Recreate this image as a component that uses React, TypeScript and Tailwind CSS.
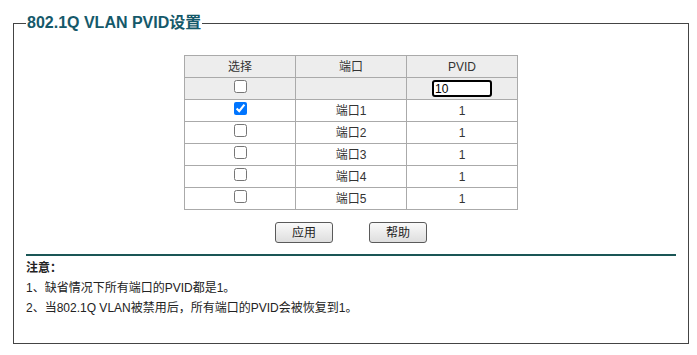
import React from 'react';

const ports = [
  { name: '端口1', pvid: 1, checked: true },
  { name: '端口2', pvid: 1, checked: false },
  { name: '端口3', pvid: 1, checked: false },
  { name: '端口4', pvid: 1, checked: false },
  { name: '端口5', pvid: 1, checked: false },
];

const font = { fontFamily: 'Arial, "Liberation Sans", "Noto Sans CJK SC", sans-serif' };

function Btn({ label }: { label: string }) {
  return (
    <button
      type="button"
      className="w-[58px] h-[21px] rounded-[3px] border border-[#5a5a5a] bg-gradient-to-b from-[#fafafa] to-[#dedede] text-[12px] text-[#222] leading-none"
    >
      {label}
    </button>
  );
}

export default function App() {
  return (
    <div className="w-[697px] h-[355px] bg-white text-[#333]" style={font}>
      <fieldset className="ml-[13px] mt-[14px] w-[676px] border border-[#444] px-[12px] pb-[25px]">
        <legend className="ml-0 px-[1px] text-[16px] leading-[18px] font-bold text-[#15596a]">
          802.1Q VLAN PVID设置
        </legend>

        {/* Table */}
        <table className="mt-[23px] mx-auto w-[333px] border-collapse text-[12px] text-center table-fixed">
          <thead>
            <tr className="h-[22px] bg-[#ededed]">
              <th className="font-normal border border-[#aaa] w-[111px]">选择</th>
              <th className="font-normal border border-[#aaa] w-[111px]">端口</th>
              <th className="font-normal border border-[#aaa] w-[111px]">PVID</th>
            </tr>
          </thead>
          <tbody>
            <tr className="h-[22px] bg-[#ededed]">
              <td className="border border-[#aaa]">
                <input type="checkbox" className="block mx-auto mt-0 mb-[5px] w-[13px] h-[13px]" />
              </td>
              <td className="border border-[#aaa]"></td>
              <td className="border border-[#aaa]">
                <input
                  type="text"
                  defaultValue="10"
                  className="block mx-auto w-[60px] h-[17px] rounded-[3px] border-2 border-black bg-white px-[1px] text-[12px] leading-[13px] text-black outline-none"
                />
              </td>
            </tr>
            {ports.map((p) => (
              <tr key={p.name} className="h-[22px] bg-white">
                <td className="border border-[#aaa]">
                  <input
                    type="checkbox"
                    defaultChecked={p.checked}
                    className="block mx-auto mt-0 mb-[5px] w-[13px] h-[13px]"
                  />
                </td>
                <td className="border border-[#aaa]">{p.name}</td>
                <td className="border border-[#aaa]">{p.pvid}</td>
              </tr>
            ))}
          </tbody>
        </table>

        {/* Buttons */}
        <div className="mt-[12px] flex justify-center gap-[36px]">
          <Btn label="应用" />
          <Btn label="帮助" />
        </div>

        {/* Notes */}
        <div className="mt-[11px] h-[2px] bg-[#1a5656]" />
        <div className="mt-[2px] text-[12px] leading-[20px] text-[#222]">
          <div className="font-bold">注意：</div>
          <div>1、缺省情况下所有端口的PVID都是1。</div>
          <div>2、当802.1Q VLAN被禁用后，所有端口的PVID会被恢复到1。</div>
        </div>
      </fieldset>
    </div>
  );
}
